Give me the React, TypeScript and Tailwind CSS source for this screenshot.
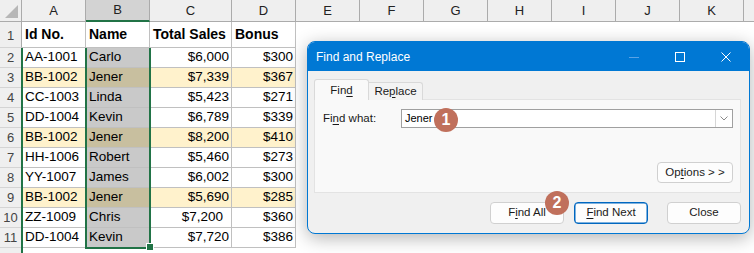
import React from "react";

type Row = [string, string, string, string, boolean, boolean?];

const rows: Row[] = [
  ["AA-1001", "Carlo", "$6,000", "$300", false],
  ["BB-1002", "Jener", "$7,339", "$367", true],
  ["CC-1003", "Linda", "$5,423", "$271", false],
  ["DD-1004", "Kevin", "$6,789", "$339", false],
  ["BB-1002", "Jener", "$8,200", "$410", true],
  ["HH-1006", "Robert", "$5,460", "$273", false],
  ["YY-1007", "James", "$6,002", "$300", false],
  ["BB-1002", "Jener", "$5,690", "$285", true],
  ["ZZ-1009", "Chris", "$7,200", "$360", false, true],
  ["DD-1004", "Kevin", "$7,720", "$386", false],
];

const extraCols = ["E", "F", "G", "H", "I", "J", "K"];

function HeaderRow() {
  return (
    <div className="flex h-[22px] shrink-0">
      <div className="relative w-[22px] shrink-0 bg-[#efefef] border-r border-b border-[#ababab]">
        <div className="absolute right-[3px] bottom-[3px] w-0 h-0 border-l-[13px] border-l-transparent border-b-[13px] border-b-[#b7b7b7]" />
      </div>
      <div className="w-[64px] shrink-0 bg-[#efefef] border-r border-b border-[#ababab] flex items-center justify-center text-[13px] text-[#222]">A</div>
      <div className="w-[64px] shrink-0 bg-[#d3d3d3] border-r border-[#ababab] border-b-2 border-b-[#217346] flex items-center justify-center text-[13px] text-[#222]">B</div>
      <div className="w-[82px] shrink-0 bg-[#efefef] border-r border-b border-[#ababab] flex items-center justify-center text-[13px] text-[#222]">C</div>
      <div className="w-[64px] shrink-0 bg-[#efefef] border-r border-b border-[#ababab] flex items-center justify-center text-[13px] text-[#222]">D</div>
      {extraCols.map((c) => (
        <div key={c} className="w-[64px] shrink-0 bg-[#efefef] border-r border-b border-[#ababab] flex items-center justify-center text-[13px] text-[#222]">
          {c}
        </div>
      ))}
      <div className="flex-1 bg-[#efefef] border-b border-[#ababab]" />
    </div>
  );
}

function TitleRow() {
  return (
    <div className="flex h-[26px] shrink-0 text-[14px] font-bold text-black">
      <div className="w-[22px] shrink-0 bg-[#efefef] border-r border-b border-[#d4d4d4] border-r-[#ababab] flex items-end justify-center pb-[2px] text-[13px] font-normal text-[#444]">1</div>
      <div className="w-[64px] shrink-0 border-r border-b border-[#c0c0c0] flex items-end pl-[3px] pb-[2px]">Id No.</div>
      <div className="w-[64px] shrink-0 border-r border-b border-[#c0c0c0] flex items-end pl-[3px] pb-[2px]">Name</div>
      <div className="w-[82px] shrink-0 border-r border-b border-[#c0c0c0] flex items-end pl-[3px] pb-[2px]">Total Sales</div>
      <div className="w-[64px] shrink-0 border-r border-b border-[#c0c0c0] flex items-end pl-[3px] pb-[2px]">Bonus</div>
      <div className="flex-1 bg-white" />
    </div>
  );
}

function DataRow({ r, n }: { r: Row; n: number }) {
  const [a, b, c, d, hi, shift] = r;
  const base = hi ? "bg-[#fff2cc]" : "bg-white";
  const bBg = hi ? "bg-[#c8bf9f]" : "bg-[#c9c9c9]";
  return (
    <div className="flex h-[20px] shrink-0 text-[13.5px] text-black">
      <div className="w-[22px] shrink-0 bg-[#efefef] border-r border-b border-[#d4d4d4] border-r-[#ababab] flex items-center justify-center text-[13px] text-[#444]">{n}</div>
      <div className={`w-[64px] shrink-0 border-r border-b border-[#c0c0c0] flex items-center pl-[3px] ${base}`}>{a}</div>
      <div className={`w-[64px] shrink-0 border-r border-b border-[#c0c0c0] flex items-center pl-[3px] ${bBg}`}>{b}</div>
      <div className={`w-[82px] shrink-0 border-r border-b border-[#c0c0c0] flex items-center justify-end ${shift ? "pr-[8px]" : "pr-[2px]"} ${base}`}>{c}</div>
      <div className={`w-[64px] shrink-0 border-r border-b border-[#c0c0c0] flex items-center justify-end pr-[2px] ${base}`}>{d}</div>
      <div className="flex-1 bg-white" />
    </div>
  );
}

function EmptyRow() {
  return (
    <div className="flex h-[20px] shrink-0">
      <div className="w-[22px] shrink-0 bg-[#efefef] border-r border-b border-[#d4d4d4] border-r-[#ababab]" />
      <div className="flex-1 bg-white" />
    </div>
  );
}

function Dialog() {
  return (
    <div className="absolute left-[307px] top-[41px] w-[443px] h-[193px] rounded-[8px] border border-[#0078d4] bg-[#f0f0f0] overflow-hidden shadow-[0_4px_18px_rgba(0,0,0,0.3)] flex flex-col text-[11.5px] text-[#1a1a1a]">
      <div className="h-[29px] shrink-0 bg-[#0078d4] flex items-center">
        <div className="pl-[8px] text-white text-[12px]">Find and Replace</div>
        <div className="ml-auto flex h-full">
          <div className="w-[46px] h-full flex items-center justify-center">
            <svg width="10" height="10" viewBox="0 0 10 10">
              <line x1="0" y1="5.5" x2="10" y2="5.5" stroke="#5aa3e6" strokeWidth="1" />
            </svg>
          </div>
          <div className="w-[46px] h-full flex items-center justify-center">
            <svg width="10" height="10" viewBox="0 0 10 10">
              <rect x="0.5" y="0.5" width="9" height="9" fill="none" stroke="#ffffff" strokeWidth="1" />
            </svg>
          </div>
          <div className="w-[46px] h-full flex items-center justify-center">
            <svg width="10" height="10" viewBox="0 0 10 10">
              <path d="M0.5 0.5 L9.5 9.5 M9.5 0.5 L0.5 9.5" stroke="#ffffff" strokeWidth="1" />
            </svg>
          </div>
        </div>
      </div>
      <div className="flex-1 flex flex-col pl-[6px] pr-[8px] pt-[8px]">
        <div className="flex items-end h-[21px] shrink-0 relative z-10">
          <div className="w-[55px] h-[21px] bg-[#f9f9f9] border border-b-0 border-[#d9d9d9] rounded-t-[3px] flex items-center justify-center pt-[1px]">
            <span>
              Fin<u className="underline-offset-2">d</u>
            </span>
          </div>
          <div className="w-[54px] h-[18px] bg-[#f3f3f3] border border-l-0 border-b-0 border-[#d9d9d9] rounded-tr-[3px] flex items-center justify-center">
            <span>
              Re<u className="underline-offset-2">p</u>lace
            </span>
          </div>
        </div>
        <div className="h-[94px] shrink-0 -mt-px bg-[#f9f9f9] border border-[#e3e3e3] flex flex-col justify-between pt-[9px] pl-[8px] pr-[7px] pb-[9px]">
          <div className="flex items-center">
            <div className="w-[78px] shrink-0">
              Fi<u className="underline-offset-2">n</u>d what:
            </div>
            <div className="flex-1 h-[19px] border border-[#a0a0a0] bg-white flex items-center">
              <span className="pl-[3px] text-black text-[11px]">Jener</span>
              <div className="ml-auto w-[17px] h-full border-l border-[#d6d6d6] flex items-center justify-center">
                <svg width="8" height="5" viewBox="0 0 8 5">
                  <path d="M0.5 0.5 L4 4 L7.5 0.5" fill="none" stroke="#8a8a8a" strokeWidth="1" />
                </svg>
              </div>
            </div>
          </div>
          <div className="flex justify-end">
            <div className="w-[76px] h-[21px] border border-[#d0d0d0] rounded-[4px] bg-[#fdfdfd] flex items-center justify-center">
              <span>
                Op<u className="underline-offset-2">t</u>ions &gt; &gt;
              </span>
            </div>
          </div>
        </div>
        <div className="flex justify-end mt-[9px]">
          <div className="w-[74px] h-[22px] border border-[#d0d0d0] rounded-[4px] bg-[#fdfdfd] flex items-center justify-center">
            <span>
              F<u className="underline-offset-2">i</u>nd All
            </span>
          </div>
          <div className="w-[74px] h-[22px] ml-[10px] border border-[#0067c0] shadow-[inset_0_0_0_0.5px_#0067c0] rounded-[4px] bg-[#fdfdfd] flex items-center justify-center">
            <span>
              <u className="underline-offset-2">F</u>ind Next
            </span>
          </div>
          <div className="w-[74px] h-[22px] ml-[19px] border border-[#d0d0d0] rounded-[4px] bg-[#fdfdfd] flex items-center justify-center">
            <span>Close</span>
          </div>
        </div>
      </div>
      <div className="absolute left-[126px] top-[66px] w-[24px] h-[24px] rounded-full bg-[#c0705c] text-white font-bold text-[16px] flex items-center justify-center">1</div>
      <div className="absolute left-[237px] top-[149px] w-[24px] h-[24px] rounded-full bg-[#c0705c] text-white font-bold text-[16px] flex items-center justify-center">2</div>
    </div>
  );
}

export default function App() {
  return (
    <div className="relative w-[754px] h-[253px] overflow-hidden bg-white font-['Liberation_Sans',Arial,sans-serif]">
      <div className="flex flex-col">
        <HeaderRow />
        <TitleRow />
        {rows.map((r, i) => (
          <DataRow key={i} r={r} n={i + 2} />
        ))}
        <EmptyRow />
      </div>
      <div className="absolute left-[21px] top-[48px] w-[2px] bottom-0 bg-[#217346]" />
      <div className="absolute left-[85px] top-[48px] w-[66px] h-[201px] border-2 border-t-0 border-[#217346]" />
      <div className="absolute left-[146px] top-[243px] w-[8px] h-[8px] bg-[#217346] border border-white" />
      <Dialog />
    </div>
  );
}
